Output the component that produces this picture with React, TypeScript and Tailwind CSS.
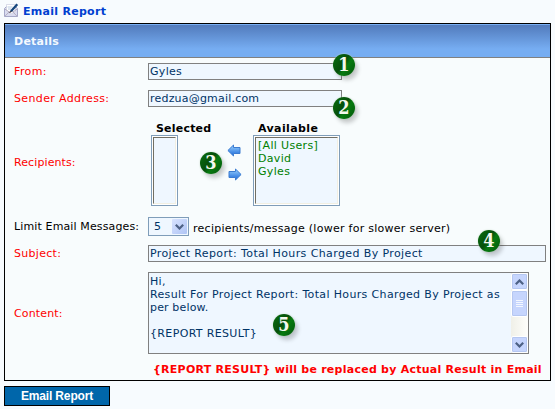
import React from 'react';

function Badge({ n, className }: { n: number; className: string }) {
  return (
    <span
      className={`absolute z-10 flex h-[22px] w-[22px] items-center justify-center rounded-full bg-[linear-gradient(125deg,#08700f_0%,#064f0b_45%,#077a10_60%,#04560b_100%)] font-['DejaVu_Serif_Condensed','DejaVu_Serif',serif] text-[18px] leading-[22px] font-bold text-[#f4f8ee] shadow-[3px_4px_4px_rgba(0,0,0,0.2),0_0_2px_#c8dcc8] ${className}`}
    >
      {n}
    </span>
  );
}

function Row({ label, className, labelClass, children }: { label: string; className: string; labelClass: string; children: React.ReactNode }) {
  return (
    <div className={`flex shrink-0 items-center ${className}`}>
      <div className={`w-[143px] shrink-0 pl-[9px] ${labelClass}`}>{label}</div>
      {children}
    </div>
  );
}

function ListBox({ className, children }: { className: string; children?: React.ReactNode }) {
  return (
    <div className={`h-[71px] shrink-0 border border-[#7f9db9] bg-white p-px ${className}`}>
      <div className="h-full border border-t-[#716f64] border-l-[#716f64] border-r-[#f1efe2] border-b-[#f1efe2] bg-[#eff7ff] pt-px pl-[2px] leading-[13px] tracking-[0.32px] text-[#008000]">
        {children}
      </div>
    </div>
  );
}

function Arrow({ right = false }: { right?: boolean }) {
  return (
    <svg width="14" height="13" viewBox="0 0 14 13" className={right ? 'ml-px -scale-x-100' : ''}>
      <defs>
        <linearGradient id={right ? 'ar' : 'al'} x1="0" y1="0" x2="0" y2="1">
          <stop offset="0" stopColor="#9cd4ff" />
          <stop offset="1" stopColor="#1765d8" />
        </linearGradient>
      </defs>
      <path d="M.9 6.5 6.5 1v2.5h6.5v6H6.5V12z" fill={right ? 'url(#ar)' : 'url(#al)'} stroke="#3b7bd0" strokeWidth="1" />
    </svg>
  );
}

function Chevron({ up = false }: { up?: boolean }) {
  return (
    <svg width="9" height="6" viewBox="0 0 9 6" className={up ? 'rotate-180' : ''}>
      <path d="M.8.8l3.7 3.7L8.2.8" fill="none" stroke="#4d6185" strokeWidth="2.2" />
    </svg>
  );
}

function EnvelopeIcon() {
  return (
    <svg width="15" height="15" viewBox="0 0 15 15">
      <path d="M.5 5.5 3 3h8l2.5 2.5v8H.5z" fill="#d9dcf0" stroke="#a5a8c8" />
      <path d="M2.5 1.5h9v7L7 11 2.5 8z" fill="#fff" stroke="#c5c8dc" strokeWidth=".6" />
      <path d="M.8 13.3 5.5 8.6h3l4.7 4.7M.8 6l4.7 3.2M13.2 6 9 9" fill="none" stroke="#b3adc0" />
      <path d="M3.5 4h5M4 6h3" stroke="#b8c9df" />
      <path d="M13.3 1.3 7 8.2" stroke="#16477d" strokeWidth="2.3" />
      <path d="M7.3 7.8 5.6 10" stroke="#222" strokeWidth="1" />
    </svg>
  );
}

const field = 'h-[17px] border border-[#808080] bg-[#eff7ff] pl-px leading-[16px] text-[#003366] whitespace-nowrap';
const scrollBtn = 'flex shrink-0 items-center justify-center rounded-[2px] border border-white bg-[#c6d5fd] shadow-[inset_0_0_0_1px_#b5c7f1]';

export default function App() {
  return (
    <div className="relative flex h-[409px] w-[555px] flex-col overflow-hidden bg-[#f7fbfe] pl-1 font-['DejaVu_Sans',sans-serif] text-[11px] leading-[13px] text-black">
      <div className="flex h-[23px] shrink-0 items-start pt-[3px]">
        <EnvelopeIcon />
        <h1 className="ml-1 pt-[2px] font-bold tracking-[0.28px] text-[#003fd0]">Email Report</h1>
      </div>
      <div className="flex h-[358px] w-[547px] shrink-0 flex-col border border-black bg-[#f8fcfd]">
        <div className="flex h-[34px] shrink-0 items-center border-t border-b border-t-[#78aff5] border-b-[#808080] bg-linear-to-b from-[#527bbc] to-[#76adf2] to-75% pl-[9px] font-bold tracking-[0.25px] text-[#f4f9ff]">
          Details
        </div>
        <Row label="From:" className="h-[27px]" labelClass="tracking-[0.4px] text-[#ff0000]">
          <div className={`w-[194px] tracking-[0.3px] ${field}`}>Gyles</div>
        </Row>
        <Row label="Sender Address:" className="h-[27px]" labelClass="tracking-[0.36px] text-[#ff0000]">
          <div className={`w-[194px] tracking-[0.2px] ${field}`}>redzua@gmail.com</div>
        </Row>
        <Row label="Recipients:" className="h-[101px]" labelClass="tracking-[0.1px] text-[#ff0000]">
          <div className="ml-[3px] flex h-[87px] w-[76px] flex-col pt-[3px]">
            <div className="pl-[5px] font-bold tracking-[0.2px]">Selected</div>
            <ListBox className="w-[27px]" />
          </div>
          <div className="flex w-[26px] flex-col gap-[11px]">
            <Arrow />
            <Arrow right />
          </div>
          <div className="flex h-[87px] flex-col pt-[3px]">
            <div className="pl-[5px] font-bold tracking-[0.4px]">Available</div>
            <ListBox className="w-[87px]">
              <div>[All Users]</div>
              <div>David</div>
              <div>Gyles</div>
            </ListBox>
          </div>
        </Row>
        <Row label="Limit Email Messages:" className="h-[27px]" labelClass="whitespace-nowrap tracking-[0.13px]">
          <div className="flex h-[19px] w-[41px] shrink-0 items-center justify-between border border-[#7f9db9] bg-[#eff7ff] pr-px pl-[5px] text-[#003366]">
            5
            <div className="flex h-[15px] w-[15px] items-center justify-center rounded-[1px] bg-linear-to-br from-[#d8e3ff] to-[#afc4f4]">
              <Chevron />
            </div>
          </div>
          <div className="ml-[4px] pt-[3px] tracking-[0.27px] whitespace-nowrap">recipients/message (lower for slower server)</div>
        </Row>
        <Row label="Subject:" className="h-[27px]" labelClass="tracking-[0.3px] text-[#ff0000]">
          <div className={`w-[398px] tracking-[0.39px] ${field}`}>Project Report: Total Hours Charged By Project</div>
        </Row>
        <Row label="Content:" className="h-[92px]" labelClass="tracking-[0.15px] text-[#ff0000]">
          <div className="flex h-[82px] w-[381px] border border-[#808080] bg-[#eff7ff] text-[#003366]">
            <div className="grow pt-[2px] pl-px leading-[13px] tracking-[0.35px] whitespace-pre">
              <p>Hi,</p>
              <p>Result For Project Report: Total Hours Charged By Project as</p>
              <p className="tracking-[0.15px]">per below.</p>
              <p className="mt-[13px]">{'{REPORT RESULT}'}</p>
            </div>
            <div className="flex w-[17px] shrink-0 flex-col bg-linear-to-r from-[#f0f0e8] to-[#fefefb]">
              <div className={`h-[17px] ${scrollBtn}`}><Chevron up /></div>
              <div className={`h-[27px] flex-col gap-px ${scrollBtn}`}>
                <i className="h-px w-[7px] bg-[#f3f7ff]" />
                <i className="h-px w-[7px] bg-[#f3f7ff]" />
                <i className="h-px w-[7px] bg-[#f3f7ff]" />
                <i className="h-px w-[7px] bg-[#f3f7ff]" />
              </div>
              <div className={`mt-auto h-[17px] ${scrollBtn}`}><Chevron /></div>
            </div>
          </div>
        </Row>
        <div className="pt-[4px] pl-[148px] font-bold tracking-[0.25px] whitespace-nowrap text-[#ff0000]">
          {'{REPORT RESULT} will be replaced by Actual Result in Email'}
        </div>
      </div>
      <button className="mt-[5px] h-[20px] w-[106px] border border-black bg-[#0066aa] font-['Liberation_Sans',sans-serif] text-[12px] leading-[17px] font-bold tracking-[-0.15px] text-white">
        Email Report
      </button>
      <Badge n={1} className="top-[54px] left-[333px]" />
      <Badge n={2} className="top-[97px] left-[333px]" />
      <Badge n={3} className="top-[152px] left-[200px]" />
      <Badge n={4} className="top-[230px] left-[478px]" />
      <Badge n={5} className="top-[314px] left-[273px]" />
    </div>
  );
}
